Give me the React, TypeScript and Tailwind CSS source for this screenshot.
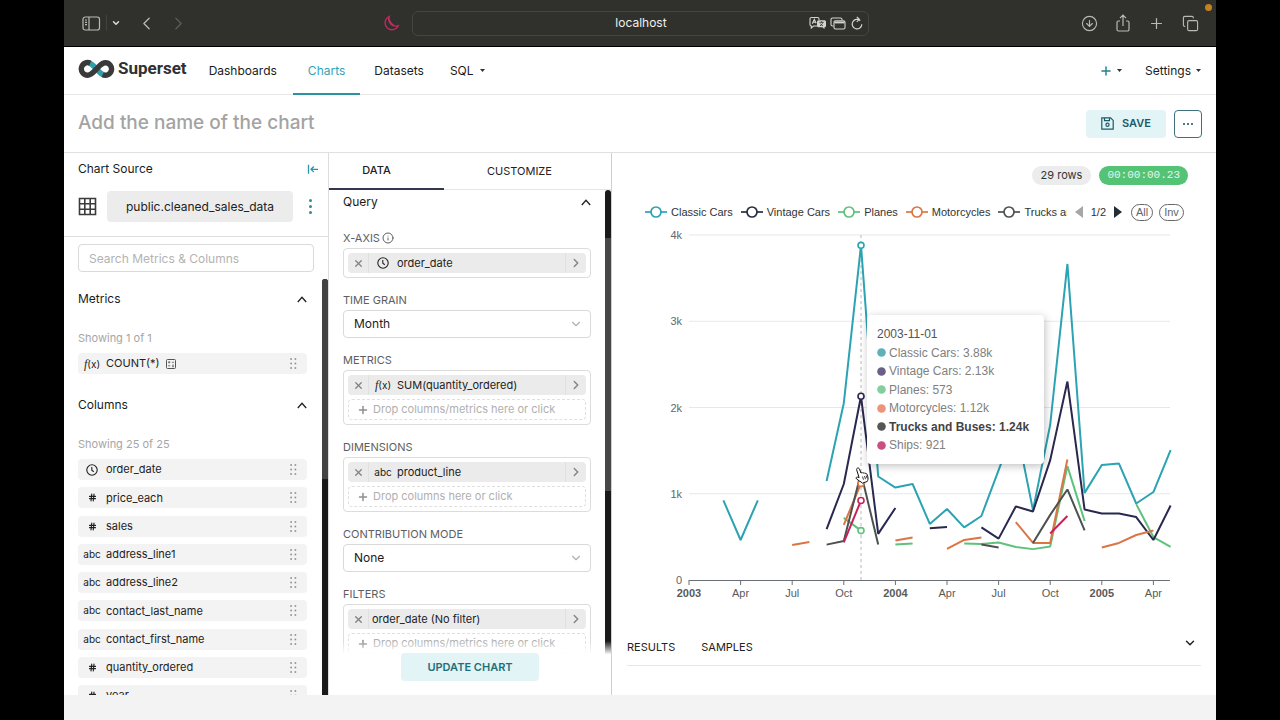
import React from "react";
import { CircleArrowDown, ChevronDown, ChevronLeft, ChevronRight, Copy, Hash, Info, Plus, X } from "lucide-react";

const TEAL = "#2ba3b3";
const NAVY = "#29284e";
const GREEN = "#5fc17b";
const ORANGE = "#dc7444";
const GREY = "#4c524f";
const PINK = "#c92058";

type Segment = [start: number, values: number[]];

const series: { name: string; color: string; segments: Segment[] }[] = [
  {
    name: "Classic Cars",
    color: TEAL,
    segments: [
      [2, [923, 464, 923]],
      [8, [1148, 2050, 3880, 1200, 1072, 1113, 650, 823, 610, 742, 1275, 1800, 810, 1800, 3664, 1010, 1333, 1350, 887, 1020, 1507]],
    ],
  },
  {
    name: "Planes",
    color: GREEN,
    segments: [
      [9, [720, 573]],
      [12, [412, 424]],
      [16, [422, 418, 435, 383, 358, 388, 1320, 684]],
      [26, [880, 498, 383]],
    ],
  },
  {
    name: "Vintage Cars",
    color: NAVY,
    segments: [
      [8, [590, 1113, 2130, 535, 835]],
      [14, [600, 615]],
      [17, [610, 480, 852, 795, 1390, 2301, 817, 771, 771, 730, 464, 863]],
    ],
  },
  {
    name: "Motorcycles",
    color: ORANGE,
    segments: [
      [6, [406, 441]],
      [9, [640, 1120]],
      [12, [458, 493]],
      [15, [360, 464, 493]],
      [19, [672, 430, 430, 1397]],
      [24, [377, 430, 522, 574]],
    ],
  },
  {
    name: "Trucks and Buses",
    color: GREY,
    segments: [
      [8, [410, 452, 1240, 412]],
      [17, [412, 377]],
      [20, [430, 755, 1050, 575]],
    ],
  },
  {
    name: "Ships",
    color: PINK,
    segments: [
      [9, [435, 921]],
      [21, [540, 742]],
    ],
  },
];

const px = (month: number) => 77 + month * 17.2;
const py = (value: number) => 355 - (value * 86.25) / 1000;

const xLabels = ["2003", "Apr", "Jul", "Oct", "2004", "Apr", "Jul", "Oct", "2005", "Apr"];
const yLabels = ["0", "1k", "2k", "3k", "4k"];

const legend = [
  { name: "Classic Cars", color: TEAL },
  { name: "Vintage Cars", color: "#252c45" },
  { name: "Planes", color: GREEN },
  { name: "Motorcycles", color: ORANGE },
];

const tooltipRows = [
  { name: "Classic Cars", value: "3.88k", color: "#5fb0bb" },
  { name: "Vintage Cars", value: "2.13k", color: "#6a5f86" },
  { name: "Planes", value: "573", color: "#84cf9e" },
  { name: "Motorcycles", value: "1.12k", color: "#ec9478" },
  { name: "Trucks and Buses", value: "1.24k", color: "#555755", active: true },
  { name: "Ships", value: "921", color: "#c9507f" },
];

const columns: { name: string; kind: "time" | "number" | "text" }[] = [
  { name: "order_date", kind: "time" },
  { name: "price_each", kind: "number" },
  { name: "sales", kind: "number" },
  { name: "address_line1", kind: "text" },
  { name: "address_line2", kind: "text" },
  { name: "contact_last_name", kind: "text" },
  { name: "contact_first_name", kind: "text" },
  { name: "quantity_ordered", kind: "number" },
  { name: "year", kind: "number" },
];

function ClockIcon() {
  return (
    <svg className="size-3" viewBox="0 0 12 12" fill="none" stroke="#222" strokeWidth="1.1" aria-hidden="true">
      <circle cx="6" cy="6" r="5.2" />
      <path d="M5.8 3v3.2l2 1.6" />
    </svg>
  );
}

function Fx() {
  return (
    <span className="text-[10px] text-[#222]">
      <i className="font-['Liberation_Serif',serif] text-xs">f</i>(x)
    </span>
  );
}

function KindIcon({ kind }: { kind: "time" | "number" | "text" }) {
  if (kind === "time") return <ClockIcon />;
  if (kind === "number") return <Hash className="size-[9px]" strokeWidth={3} color="#222" />;
  return <span className="text-[10px] text-[#222]">abc</span>;
}

function Caret() {
  return (
    <svg className="h-[3px] w-[5px]" viewBox="0 0 5 3" aria-hidden="true">
      <path d="M0 0h5L2.5 3z" fill="#333" />
    </svg>
  );
}

function ChevronUpIcon() {
  return (
    <svg className="h-[7px] w-[10px]" viewBox="0 0 10 7" fill="none" stroke="#222" strokeWidth="1.3" aria-hidden="true">
      <path d="M.8 6 5 1.2 9.2 6" />
    </svg>
  );
}

function DragDots() {
  return (
    <svg className="h-[11px] w-[7px]" viewBox="0 0 7 11" fill="#8a8a8a" aria-hidden="true">
      {[1, 5.5, 10].map((y) => (
        <React.Fragment key={y}>
          <rect x="0.3" y={y - 0.8} width="1.6" height="1.6" />
          <rect x="4.6" y={y - 0.8} width="1.6" height="1.6" />
        </React.Fragment>
      ))}
    </svg>
  );
}

function BrowserBar() {
  return (
    <header className="relative flex h-[47px] shrink-0 items-center gap-3 border-b border-black bg-[#30302c] pl-[18px] pr-[17px] text-[#b9b9b5]">
      <div className="flex flex-1 items-center">
        <button aria-label="Toggle sidebar">
          <svg className="h-[15px] w-[19px]" viewBox="0 0 19 15" fill="none" stroke="currentColor" strokeWidth="1.2">
            <rect x="1" y="1" width="16.5" height="13" rx="2.2" />
            <path d="M7 1v13M3 4h2M3 6.3h2M3 8.6h2" />
          </svg>
        </button>
        <span className="ml-[5px] h-4 w-px bg-[#42423e]" />
        <button aria-label="Tab groups" className="ml-1"><ChevronDown className="size-[10px]" strokeWidth={3.5} color="#deded9" /></button>
        <button aria-label="Back" className="ml-[15px]"><ChevronLeft className="size-[21px]" strokeWidth={1.5} /></button>
        <button aria-label="Forward" className="ml-[11px] text-[#5d5d59]"><ChevronRight className="size-[21px]" strokeWidth={1.5} /></button>
        <svg className="ml-auto size-4" viewBox="0 0 16 16" fill="none" stroke="#c22a62" strokeWidth="1.3" aria-hidden="true">
          <path d="M5.2 1.5A7 7 0 0 0 14.3 10.6A6.9 6.9 0 1 1 5.2 1.5ZM5.2 1.5C4.6 4.5 6.6 8.2 9.8 10.4" />
        </svg>
      </div>
      <div className="flex h-[25px] w-[41%] items-center rounded-md border border-[#454541] pl-[60px] pr-[5px]">
        <span className="flex-1 text-center text-xs text-[#f0f0ec]">localhost</span>
        <div className="flex items-center gap-[3px] text-[#d4d4cf]">
          <svg className="h-[14px] w-[18px]" viewBox="0 0 18 14" fill="none" stroke="currentColor" strokeWidth="1.1" aria-label="Translate">
            <path d="M8 10H4.500L2.300 12V10A1.500 1.500 0 0 1 1 8.500V3A1.500 1.500 0 0 1 2.500 1.500h6A1.500 1.500 0 0 1 10 3v1M3.300 7.800 5.300 3.400l1.800 3.900M4 6.300h2.600" />
            <path d="M9.500 4.200h6a1.500 1.500 0 0 1 1.500 1.500v4a1.500 1.500 0 0 1-1.500 1.500v1.900l-2.200-1.900H9.500A1.500 1.500 0 0 1 8 9.700v-4a1.500 1.500 0 0 1 1.500-1.500z" fill="currentColor" stroke="none" />
            <path d="M10.300 6.300h4.400M12.500 5.300v1M11 9.800c1.600-.7 2.500-2 2.700-3.400M11.300 7.500c.6 1 1.500 1.900 2.700 2.300" stroke="#30302c" strokeWidth=".8" />
          </svg>
          <svg className="h-[13px] w-4" viewBox="0 0 16 13" fill="none" stroke="currentColor" strokeWidth="1.1" aria-label="Windows">
            <path d="M3.500 9H2.500A1.500 1.500 0 0 1 1 7.500v-5A1.500 1.500 0 0 1 2.500 1h8A1.500 1.500 0 0 1 12 2.500V3" />
            <rect x="4" y="3.8" width="11" height="8.2" rx="1.5" />
            <path d="M4.500 5.400h10" strokeWidth="2" />
          </svg>
          <button aria-label="Reload" className="ml-0.5">
            <svg className="h-[14px] w-3" viewBox="0 0 12 14" fill="none" stroke="currentColor" strokeWidth="1.2">
              <path d="M9.300 4.600A4.800 4.800 0 1 0 10.800 8.200M5.800 .8 8.300 3.300 5.800 5.800M8.300 3.300H6" />
            </svg>
          </button>
        </div>
      </div>
      <div className="flex flex-1 items-center justify-end gap-[17px]">
        <button aria-label="Downloads"><CircleArrowDown className="size-[17px]" strokeWidth={1.6} /></button>
        <button aria-label="Share">
          <svg className="h-[19px] w-4" viewBox="0 0 16 19" fill="none" stroke="currentColor" strokeWidth="1.2">
            <path d="M5 7H3.500A1.500 1.500 0 0 0 2 8.500v7A1.500 1.500 0 0 0 3.500 17h9a1.500 1.500 0 0 0 1.500-1.500v-7A1.500 1.500 0 0 0 12.500 7H11M8 12V1.300M5 4.200l3-3 3 3" />
          </svg>
        </button>
        <button aria-label="New tab"><Plus className="size-[17px]" strokeWidth={1.7} /></button>
        <button aria-label="Show tabs"><Copy className="size-[17px]" strokeWidth={1.6} /></button>
      </div>
      <span className="absolute right-1 top-1 size-[7px] rounded-full bg-[#c2821f]" />
    </header>
  );
}

function Logo() {
  return (
    <a href="#home" className="flex items-center gap-[3px]">
      <svg className="h-5 w-[37px]" viewBox="0 0 37 20" fill="none" strokeWidth="5.4" aria-hidden="true">
        <path d="M11 3.900C14 4.800 16 7.500 18.500 10s4.500 5.200 7.500 6.100" stroke="#2f9fb0" />
        <path d="M12.300 4.200A6.300 6.300 0 1 0 9.600 16.200c3.800 0 6-3.300 8.900-6.200s5.100-6.200 8.900-6.200a6.200 6.200 0 1 1-2.700 11.800" stroke="#3a3a3a" />
      </svg>
      <span className="text-[17px] font-bold text-[#303030] font-['Roboto',sans-serif]">Superset</span>
    </a>
  );
}

function AppNav() {
  return (
    <nav className="flex h-12 shrink-0 items-stretch border-b border-[#e8e8e8] pl-[14px] pr-[15px] text-[12px] text-[#1b1b1b]">
      <div className="flex items-center pb-1"><Logo /></div>
      <a href="#dashboards" className="ml-[22px] flex items-center">Dashboards</a>
      <a href="#charts" className="-mb-px ml-4 flex items-center border-b-2 border-[#2a939f] px-[15px] pt-px text-[#35a3b6]">Charts</a>
      <a href="#datasets" className="ml-[14px] flex items-center">Datasets</a>
      <button className="ml-[26px] flex items-center gap-[6px]">SQL <Caret /></button>
      <span className="flex-1" />
      <button aria-label="Add" className="flex items-center gap-1">
        <Plus className="size-[14px]" strokeWidth={2.500} color="#23808f" />
        <Caret />
      </button>
      <button className="ml-[23px] flex items-center gap-[5px]">Settings <Caret /></button>
    </nav>
  );
}

function TitleBar() {
  return (
    <div className="flex h-[58px] shrink-0 items-center gap-2 border-b border-[#e0e0e0] px-[14px]">
      <input
        aria-label="Chart name"
        placeholder="Add the name of the chart"
        className="min-w-0 flex-1 text-[19px] font-medium outline-none placeholder:text-[#a3a3a3]"
      />
      <button className="flex h-7 w-20 items-center justify-center gap-2 rounded bg-[#e2f4f6] text-[11px] font-semibold text-[#1d5a66]">
        <svg className="size-[13px]" viewBox="0 0 13 13" fill="none" stroke="currentColor" strokeWidth="1.2" aria-hidden="true">
          <path d="M.8.8h8.800l2.600 2.600v8.800H.8zM3.500 1v2.700h5V1" />
          <circle cx="6.5" cy="7.8" r="1.6" />
        </svg>
        SAVE
      </button>
      <button aria-label="More actions" className="flex size-7 items-center justify-center gap-0.5 rounded border border-[#41717c]">
        <i className="size-0.5 rounded-full bg-[#1d4a56]" />
        <i className="size-0.5 rounded-full bg-[#1d4a56]" />
        <i className="size-0.5 rounded-full bg-[#1d4a56]" />
      </button>
    </div>
  );
}

function SectionHead({ title }: { title: string }) {
  return (
    <button className="flex h-5 w-full items-center justify-between text-[12px] text-[#1b1b1b]">
      {title}
      <ChevronUpIcon />
    </button>
  );
}

function SourceRow({ icon, name, extra }: { icon: React.ReactNode; name: string; extra?: React.ReactNode }) {
  return (
    <li className="flex h-[21px] items-center rounded-sm bg-[#f3f3f3] pr-[10px] text-[11px] text-[#222]">
      <span className="flex w-7 items-center justify-center">{icon}</span>
      <span>{name}</span>
      {extra}
      <span className="ml-auto"><DragDots /></span>
    </li>
  );
}

function SourcePanel() {
  return (
    <aside className="flex w-[265px] shrink-0 flex-col border-r border-[#dcdcdc]">
      <div className="h-[84px] shrink-0 border-b border-[#dedede] pl-[14px] pr-[9px] pt-[6px]">
        <div className="flex h-5 items-center justify-between text-[12px] text-[#1b1b1b]">
          Chart Source
          <button aria-label="Collapse panel">
            <svg className="h-[11px] w-3" viewBox="0 0 12 11" fill="none" stroke="#2b93ad" strokeWidth="1.3">
              <path d="M1.500.8v9M11 5.300H4M6.800 2.500 4 5.300l2.800 2.800" />
            </svg>
          </button>
        </div>
        <div className="mt-3 flex items-center">
          <svg className="size-[19px]" viewBox="0 0 19 19" fill="none" stroke="#3b3b3b" strokeWidth="1.6" aria-hidden="true">
            <path d="M1.500 1.500h16v16h-16zM6.800 1.500v16M12.200 1.500v16M1.500 6.800h16M1.500 12.200h16" />
          </svg>
          <button className="ml-[10px] h-[31px] flex-1 rounded bg-[#ececec] text-[12px] text-[#222]">public.cleaned_sales_data</button>
          <button aria-label="Dataset options" className="ml-[14px] mr-[5px] flex w-[7px] flex-col items-center gap-[3px]">
            <i className="size-[3px] rounded-full bg-[#2a8f98]" />
            <i className="size-[3px] rounded-full bg-[#2a8f98]" />
            <i className="size-[3px] rounded-full bg-[#2a8f98]" />
          </button>
        </div>
      </div>
      <div className="pl-[14px] pr-[14px] pt-[7px]">
        <input
          aria-label="Search Metrics & Columns"
          placeholder="Search Metrics & Columns"
          className="h-7 w-full rounded border border-[#d9d9d9] px-[10px] text-[12px] outline-none placeholder:text-[#b3b3b3]"
        />
      </div>
      <div className="mt-[7px] flex min-h-0 flex-1">
        <div className="flex-1 overflow-hidden pl-[14px] pr-[15px] pt-[10px]">
          <SectionHead title="Metrics" />
          <p className="mt-5 text-[11px] leading-[18px] text-[#a6a6a6]">Showing 1 of 1</p>
          <ul className="mt-[6px]">
            <SourceRow
              icon={<Fx />}
              name="COUNT(*)"
              extra={
                <svg className="ml-[6px] size-[10px]" viewBox="0 0 10 10" fill="none" stroke="#555" aria-hidden="true">
                  <rect x=".5" y=".5" width="9" height="9" rx="1" />
                  <path d="M2 3.300h2.300M3.200 2.200v2.200M6 3.300h2M2 6.800h2.300M6 6.200h2M6 7.700h2" strokeWidth=".8" />
                </svg>
              }
            />
          </ul>
          <div className="mt-[21px]"><SectionHead title="Columns" /></div>
          <p className="mt-5 text-[11px] leading-[18px] text-[#a6a6a6]">Showing 25 of 25</p>
          <ul className="mt-[6px] flex h-[247px] flex-col justify-between">
            {columns.map((c) => (
              <SourceRow key={c.name} icon={<KindIcon kind={c.kind} />} name={c.name} />
            ))}
          </ul>
        </div>
        <div className="w-[6px] overflow-hidden rounded-t-full bg-[#1a1a1a]">
          <div className="h-[48%] bg-[#434343]" />
        </div>
      </div>
    </aside>
  );
}

function Field({ label, id, info, children }: { label: string; id?: string; info?: boolean; children: React.ReactNode }) {
  return (
    <div>
      <label htmlFor={id} className="mb-0.5 flex h-4 items-center gap-0.5 text-[11px] text-[#5e5e5e]">
        {label}
        {info && <Info className="size-3" strokeWidth={2} />}
      </label>
      {children}
    </div>
  );
}

function SelectBox({ id, value }: { id: string; value: string }) {
  return (
    <div className="grid items-center">
      <select id={id} defaultValue={value} className="col-start-1 row-start-1 h-7 w-full appearance-none rounded border border-[#d9d9d9] bg-white px-[10px] text-[12px] text-[#1b1b1b]">
        <option>{value}</option>
      </select>
      <ChevronDown className="pointer-events-none col-start-1 row-start-1 mr-2 size-[14px] justify-self-end" strokeWidth={2} color="#b0b0b0" />
    </div>
  );
}

function DropBox({ icon, value, hint }: { icon?: React.ReactNode; value: string; hint?: string }) {
  return (
    <div className="flex flex-col gap-1 rounded border border-[#dcdcdc] p-1">
      <div className="flex h-5 items-stretch rounded-sm bg-[#ebebeb] text-[11px] text-[#222]">
        <button aria-label={`Remove ${value}`} className="flex w-[21px] items-center justify-center border-r border-[#e0e0e0]">
          <X className="size-[11px]" strokeWidth={3} color="#858585" />
        </button>
        {icon ? <span className="flex w-[28px] items-center justify-center">{icon}</span> : <span className="w-[3px]" />}
        <span className="flex flex-1 items-center">{value}</span>
        <button aria-label={`Edit ${value}`} className="flex w-[21px] items-center justify-center border-l border-[#e0e0e0]">
          <ChevronRight className="size-[14px]" strokeWidth={2.500} color="#858585" />
        </button>
      </div>
      {hint && (
        <button className="flex h-[21px] items-center gap-1 rounded-sm border border-dashed border-[#e0e0e0] pl-[8px] text-[11px] text-[#b0b0b0]">
          <Plus className="size-3" strokeWidth={3} color="#8f8f8f" />
          {hint}
        </button>
      )}
    </div>
  );
}

function ControlPanel() {
  return (
    <section className="flex w-[283px] shrink-0 flex-col border-r border-[#cfcfcf]">
      <div role="tablist" className="flex h-[37px] shrink-0 border-b border-[#e6e6e6] text-[11px] text-[#222]">
        <button role="tab" aria-selected="true" className="-mb-px w-[115px] border-b-2 border-[#33384f] pr-5 font-medium">DATA</button>
        <button role="tab" aria-selected="false" className="ml-[43px]">CUSTOMIZE</button>
      </div>
      <div className="relative flex min-h-0 flex-1">
        <div className="flex flex-1 flex-col gap-[14px] overflow-hidden pl-[14px] pr-[14px] pt-[2px]">
          <div className="mb-1"><SectionHead title="Query" /></div>
          <Field label="X-AXIS" info><DropBox icon={<ClockIcon />} value="order_date" /></Field>
          <Field label="TIME GRAIN" id="grain"><SelectBox id="grain" value="Month" /></Field>
          <Field label="METRICS"><DropBox icon={<Fx />} value="SUM(quantity_ordered)" hint="Drop columns/metrics here or click" /></Field>
          <Field label="DIMENSIONS"><DropBox icon={<KindIcon kind="text" />} value="product_line" hint="Drop columns here or click" /></Field>
          <Field label="CONTRIBUTION MODE" id="mode"><SelectBox id="mode" value="None" /></Field>
          <Field label="FILTERS"><DropBox value="order_date (No filter)" hint="Drop columns/metrics here or click" /></Field>
        </div>
        <div className="w-[6px] overflow-hidden rounded-t-full bg-[#1a1a1a]">
          <div className="mt-12 h-1/2 bg-[#474747]" />
        </div>
        <div className="absolute inset-x-0 bottom-0 bg-linear-to-b from-white/0 to-white to-25% pb-[14px] pt-3 text-center">
          <button className="h-7 w-[138px] rounded bg-[#e2f4f6] text-[11px] font-semibold text-[#1f6f7b]">UPDATE CHART</button>
        </div>
      </div>
    </section>
  );
}

function LegendMark({ color }: { color: string }) {
  return (
    <svg className="h-3 w-[22px] shrink-0" viewBox="0 0 22 12" fill="#fff" stroke={color} strokeWidth="1.7" aria-hidden="true">
      <path d="M0 6h22" />
      <circle cx="11" cy="6" r="5" />
    </svg>
  );
}

function Legend() {
  return (
    <div className="mt-[17px] flex h-5 items-center pl-[33px] pr-8 font-['Liberation_Sans',Arial,sans-serif] text-[11px] text-[#333]">
      <ul className="flex min-w-0 flex-1 items-center gap-2 overflow-hidden whitespace-nowrap">
        {legend.map((l) => (
          <li key={l.name} className="flex shrink-0 items-center gap-1">
            <LegendMark color={l.color} />
            {l.name}
          </li>
        ))}
        <li className="flex min-w-0 items-center gap-1">
          <LegendMark color={GREY} />
          <span className="min-w-0 overflow-hidden">Trucks and Buses</span>
        </li>
      </ul>
      <button aria-label="Previous legend page" className="ml-2">
        <svg className="h-3 w-2" viewBox="0 0 8 12"><path d="M8 0v12L0 6z" fill="#a6a6a6" /></svg>
      </button>
      <span className="mx-2">1/2</span>
      <button aria-label="Next legend page">
        <svg className="h-3 w-2" viewBox="0 0 8 12"><path d="M0 0v12l8-6z" fill="#252c36" /></svg>
      </button>
      <button className="ml-[9px] h-[17px] w-[22px] rounded-full border border-[#666] leading-[14px] text-[#666]">All</button>
      <button className="ml-[6px] h-[17px] w-[25px] rounded-full border border-[#666] leading-[14px] text-[#666]">Inv</button>
    </div>
  );
}

function LineChart() {
  const hover = px(10);
  const marks: [number, string][] = [
    [3880, TEAL],
    [2130, NAVY],
    [573, GREEN],
    [1120, ORANGE],
    [921, PINK],
  ];
  return (
    <svg className="block w-full font-['Liberation_Sans',Arial,sans-serif]" viewBox="0 0 604 380" role="img" aria-label="Quantity ordered per month by product line">
      {yLabels.map((label, i) => (
        <g key={label}>
          {i > 0 && <path d={`M77 ${py(i * 1000)}H558`} stroke="#e3e8ee" />}
          <text x="70" y={py(i * 1000) + 4} textAnchor="end" fontSize="11" fill="#666">{label}</text>
        </g>
      ))}
      <path d="M77 355.500H558" stroke="#6b6f76" />
      {xLabels.map((label, i) => (
        <g key={i}>
          <path d={`M${px(i * 3)} 355v5`} stroke="#6b6f76" />
          <text x={px(i * 3)} y="372" textAnchor="middle" fontSize="11" fontWeight={label.length === 4 ? 700 : 400} fill="#5a5a5a">{label}</text>
        </g>
      ))}
      <path d={`M${hover} 10V355`} stroke="#b9b9b9" strokeDasharray="3 3" />
      {series.map((s) =>
        s.segments.map(([start, values]) => (
          <polyline
            key={`${s.name}-${start}`}
            points={values.map((v, i) => `${px(start + i)},${py(v)}`).join(" ")}
            fill="none"
            stroke={s.color}
            strokeWidth="2"
            strokeLinejoin="bevel"
          />
        ))
      )}
      {marks.map(([value, color]) => (
        <circle key={value} cx={hover} cy={py(value)} r="3" fill="#fff" stroke={color} strokeWidth="1.6" />
      ))}
    </svg>
  );
}

function Tooltip() {
  return (
    <div className="absolute left-[255px] top-[90px] flex h-[149px] w-[177px] flex-col justify-between rounded-sm bg-white p-[10px] font-['Liberation_Sans',Arial,sans-serif] text-[12px] leading-[18px] text-[#808080] shadow-[1px_2px_8px_rgba(0,0,0,0.25)]">
      <p className="text-[#555]">2003-11-01</p>
      {tooltipRows.map((r) => (
        <p key={r.name} className={r.active ? "flex items-center gap-[3px] whitespace-nowrap font-bold text-[#444]" : "flex items-center gap-[3px] whitespace-nowrap"}>
          <svg className="size-[9px]" viewBox="0 0 9 9"><circle cx="4.5" cy="4.5" r="4.3" fill={r.color} /></svg>
          {r.name}: {r.value}
        </p>
      ))}
    </div>
  );
}

function HandCursor() {
  return (
    <svg className="absolute left-[243px] top-[242px] h-[17px] w-[15px]" viewBox="0 0 15 17" aria-hidden="true">
      <path d="M2.500 1.100c.9-.4 1.700.2 2 1l1.500 4c.5-.7 1.500-.7 2 .1.600-.6 1.600-.5 2 .3.800-.4 1.700 0 2 .8l.8 2.500c.5 1.800.2 3.200-.6 4.700L7.300 16.200c-.6-1-1.700-1.500-2.900-2.200L1.600 12c-1-.8-.3-2.200 1-1.900l1.500.5L1.700 2.900c-.3-.8.100-1.500.8-1.800z" fill="#fff" stroke="#111" />
      <path d="M7.500 9.500l1 3.200M9.500 9l1 3.200M11.200 8.600l.8 2.600" stroke="#111" strokeWidth=".8" />
    </svg>
  );
}

function ChartPanel() {
  return (
    <main className="min-w-0 flex-1">
      <div className="flex justify-end gap-2 pr-7 pt-[13px]">
        <span className="flex h-[19px] items-center rounded-full bg-[#ececec] px-[9px] text-[11px] text-[#333]">29 rows</span>
        <span className="flex h-[19px] items-center rounded-full bg-[#55c376] px-2 font-['Liberation_Mono',monospace] text-[11px] text-[#e4f7e9]">00:00:00.23</span>
      </div>
      <Legend />
      <div className="relative mt-[3px]">
        <LineChart />
        <Tooltip />
        <HandCursor />
      </div>
      <div className="mx-[15px] mt-6 flex h-[37px] items-center border-b border-[#e6e6e6] text-[11px] text-[#222]">
        <button>RESULTS</button>
        <button className="ml-[26px]">SAMPLES</button>
        <button aria-label="Collapse results" className="ml-auto mr-1 pb-2"><ChevronDown className="size-[14px]" strokeWidth={2.500} color="#222" /></button>
      </div>
    </main>
  );
}

export default function App() {
  return (
    <div className="h-screen overflow-hidden bg-black px-[5%] font-['Inter',sans-serif]">
      <div className="flex h-full flex-col bg-white">
        <BrowserBar />
        <AppNav />
        <TitleBar />
        <div className="flex min-h-0 flex-1">
          <SourcePanel />
          <ControlPanel />
          <ChartPanel />
        </div>
        <footer className="h-[25px] shrink-0 bg-[#f3f3f3]" />
      </div>
    </div>
  );
}
